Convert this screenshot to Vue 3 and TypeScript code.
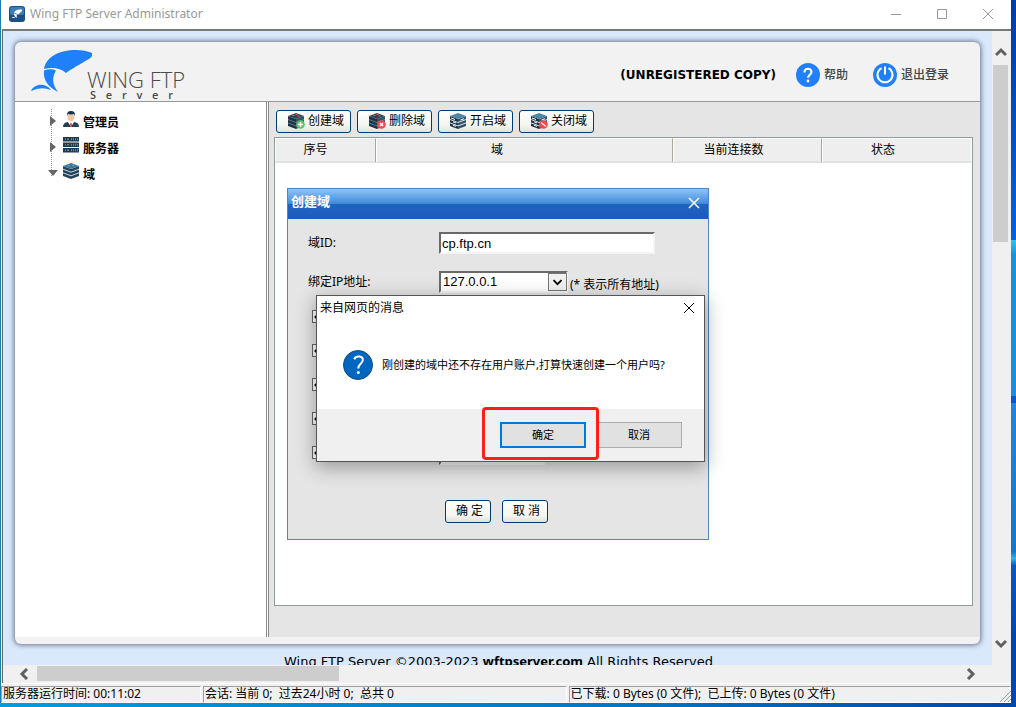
<script setup lang="ts">
import { ref } from 'vue'

type Badge = 'add' | 'remove' | 'none' | 'block'

interface Action {
  label: string
  badge: Badge
  lit: boolean
}

const actions: Action[] = [
  { label: '创建域', badge: 'add', lit: true },
  { label: '删除域', badge: 'remove', lit: true },
  { label: '开启域', badge: 'none', lit: false },
  { label: '关闭域', badge: 'block', lit: false },
]

const columns = ['序号', '域', '当前连接数', '状态']
const services = ['FTP', 'FTPS', 'HTTP', 'HTTPS', 'SSH']

const domainId = ref('cp.ftp.cn')
const address = ref('127.0.0.1')
const enabled = ref<boolean[]>(services.map(() => true))
</script>

<template>
  <div class="desktop">
    <div class="window">
      <header class="titlebar">
        <svg class="app-icon" viewBox="0 0 16 16">
          <rect width="16" height="16" rx="3" fill="#1c4f86" />
          <rect x="1" y="1" width="14" height="8" rx="2" fill="#3c7db8" />
          <path d="M5 7C6 4 9 3 13 3.500L13 5L9 8.500Q7 6.500 5 7Z" fill="#fff" />
          <path d="M5 7.500L8 8.500Q7 10 8.500 12Q5 11 5 7.500ZM2.500 12Q4.500 10 6.500 12Z" fill="#fff" />
        </svg>
        <span class="app-name">Wing FTP Server Administrator</span>
        <button class="caption" aria-label="Minimize">
          <svg viewBox="0 0 12 12"><path d="M1 6.500H11" /></svg>
        </button>
        <button class="caption" aria-label="Maximize">
          <svg viewBox="0 0 12 12"><path d="M1.500 1.500H10.500V10.500H1.500Z" /></svg>
        </button>
        <button class="caption" aria-label="Close">
          <svg viewBox="0 0 12 12"><path d="M1 1L11 11M11 1L1 11" /></svg>
        </button>
      </header>

      <div class="viewport">
        <main class="page">
          <div class="panel">
            <div class="banner">
              <div class="brand">
                <svg class="brand-mark" viewBox="0 0 62 44">
                  <path d="M13 20C15 8 28 1 45 1Q54 1 61 4V7C60 10 46 16 35 24Q27 17 13 20Z" fill="#1f80fa" />
                  <path d="M13 21.500Q20 19 25 21.500C21 28 21 35 27 43C17 38 12 31 13 21.500Z" fill="#1f80fa" />
                  <path d="M0 42C3 35 14 33 20 41Q10 37 0 42Z" fill="#1f80fa" />
                </svg>
                <div class="brand-text">
                  <span class="brand-name">WING FTP</span>
                  <span class="brand-sub"><i v-for="(c, n) in 'Server'" :key="n">{{ c }}</i></span>
                </div>
              </div>
              <strong class="license">(UNREGISTERED COPY)</strong>
              <a class="nav help" href="#help">
                <svg viewBox="0 0 24 24">
                  <circle cx="12" cy="12" r="12" fill="#1f80fa" />
                  <path d="M8.500 9.500C8.500 4.500 15.500 4.700 15.500 9C15.500 11.500 12 12 12 14.800" fill="none" stroke="#fff" stroke-width="2.200" />
                  <circle cx="12" cy="18" r="1.400" fill="#fff" />
                </svg>
                帮助
              </a>
              <a class="nav" href="#logout">
                <svg viewBox="0 0 24 24">
                  <circle cx="12" cy="12" r="12" fill="#1f80fa" />
                  <path d="M8.500 5.200A7.500 7.500 0 1 0 15.500 5.200M12 3.500V11.500" fill="none" stroke="#fff" stroke-width="2" />
                </svg>
                退出登录
              </a>
            </div>

            <div class="body">
              <nav class="tree">
                <ul>
                  <li>
                    <svg class="arrow" viewBox="0 0 10 10"><path d="M2 0L8 5L2 10Z" /></svg>
                    <svg class="node" viewBox="0 0 16 16">
                      <path d="M0 16Q0 11.500 5 11L8 13L11 11Q16 11.500 16 16Z" fill="#243f57" />
                      <path d="M5 11L8 16L11 11L9.500 9H6.500Z" fill="#fff" />
                      <path d="M7.300 12H8.700L9.200 16H6.800Z" fill="#e0454b" />
                      <path d="M4.500 4Q4.500 10.500 8 10.500Q11.500 10.500 11.500 4Z" fill="#f8c3a0" />
                      <path d="M4 5Q3.500 0 8 0Q12.500 0 12 5L11 3Q8 4 5 3Z" fill="#17324a" />
                    </svg>
                    <a href="#admin">管理员</a>
                  </li>
                  <li>
                    <svg class="arrow" viewBox="0 0 10 10"><path d="M2 0L8 5L2 10Z" /></svg>
                    <svg class="node" viewBox="0 0 16 16">
                      <path d="M0 0H16V4.500H0ZM0 5.500H16V10H0ZM0 11H16V15.500H0Z" fill="#1d3a52" />
                      <path d="M8 2.300H15M8 7.800H15M8 13.300H15" stroke="#6e8ba0" stroke-width="2" stroke-dasharray="1 1" />
                      <path d="M2 2.300H3M2 7.800H3M2 13.300H3" stroke="#f5503c" stroke-width="1.500" />
                      <path d="M4.500 2.300H5.500M4.500 7.800H5.500M4.500 13.300H5.500" stroke="#f9c23c" stroke-width="1.500" />
                    </svg>
                    <a href="#server">服务器</a>
                  </li>
                  <li>
                    <svg class="arrow" viewBox="0 0 10 10"><path d="M0 2H10L5 8Z" /></svg>
                    <svg class="node" viewBox="0 0 16 16">
                      <path d="M0 3L8 6L16 3V13L8 16L0 13Z" fill="#24435a" />
                      <path d="M0 6.200L8 9.200L16 6.200M0 9.800L8 12.800L16 9.800" fill="none" stroke="#dfe8ee" stroke-width="0.900" />
                      <path d="M0 3L8 0L16 3L8 6Z" fill="#3f7898" />
                      <path d="M5 2.500H6.500M9.500 2.500H11" stroke="#f58a3c" />
                    </svg>
                    <a href="#domain">域</a>
                  </li>
                </ul>
              </nav>

              <section class="content">
                <div class="toolbar">
                  <button v-for="a in actions" :key="a.label" class="xp-button action">
                    <svg viewBox="0 0 17 16">
                      <path d="M0 3L8 6V16L0 13Z" fill="#1c3346" />
                      <path d="M16 3L8 6V16L16 13Z" fill="#33536b" />
                      <path d="M0 3L8 0L16 3L8 6Z" :fill="a.lit ? '#2b4558' : '#4f86a3'" />
                      <path d="M0 6.500L8 9.500L16 6.500M0 9.900L8 12.900L16 9.900" fill="none" :stroke="a.lit ? '#8fa1ad' : '#f4f6f7'" :stroke-width="a.lit ? 0.6 : 0.9" />
                      <path v-if="a.lit" d="M4.500 2.500H6.500M7.500 1.500H9.500M9.500 3H11.500" stroke="#f5663c" />
                      <path v-else d="M1 5L5 6.500M3 8.800L6 10M3 12.200L6 13.400M10.500 7L14 5.700" stroke="#fff" />
                      <g v-if="a.badge !== 'none'">
                        <circle cx="12.500" cy="11.500" r="4.300" :fill="a.badge === 'add' ? '#42d35d' : '#f2494f'" />
                        <path v-if="a.badge === 'add'" d="M12.500 9V14M10 11.500H15" stroke="#fff" stroke-width="1.500" />
                        <path v-else-if="a.badge === 'remove'" d="M11 10L14 13M14 10L11 13" stroke="#fff" stroke-width="1.500" />
                        <path v-else d="M10 9.500L15 13.500" stroke="#fff" stroke-width="1.200" />
                      </g>
                    </svg>
                    <span>{{ a.label }}</span>
                  </button>
                </div>

                <div class="grid">
                  <table>
                    <thead>
                      <tr>
                        <th v-for="c in columns" :key="c" scope="col">{{ c }}</th>
                      </tr>
                    </thead>
                  </table>
                </div>

                <form class="dialog" @submit.prevent>
                  <div class="dialog-title">
                    <strong>创建域</strong>
                    <button type="button" aria-label="关闭">
                      <svg viewBox="0 0 12 12"><path d="M1 1L11 11M11 1L1 11" /></svg>
                    </button>
                  </div>
                  <div class="fields">
                    <div class="field">
                      <label for="domain-id">域ID:</label>
                      <input id="domain-id" v-model="domainId" class="sunken wide" type="text" />
                    </div>
                    <div class="field">
                      <label for="address">绑定IP地址:</label>
                      <div class="combo">
                        <select id="address" v-model="address" class="sunken">
                          <option>127.0.0.1</option>
                          <option>*</option>
                        </select>
                        <svg viewBox="0 0 16 18"><path d="M3.500 7L8 11.500L12.500 7" /></svg>
                      </div>
                      <span class="hint">(* 表示所有地址)</span>
                    </div>
                    <div v-for="(s, n) in services" :key="s" class="service">
                      <input v-model="enabled[n]" type="checkbox" :aria-label="s" />
                      <input class="sunken port" type="text" :aria-label="s" />
                    </div>
                  </div>
                  <div class="dialog-buttons">
                    <button class="xp-button" type="submit">确 定</button>
                    <button class="xp-button" type="button">取 消</button>
                  </div>
                </form>
              </section>
            </div>
          </div>
          <footer class="copyright">Wing FTP Server ©2003-2023 <a href="#home">wftpserver.com</a> All Rights Reserved</footer>
        </main>

        <div class="scroll vertical">
          <button aria-label="Up"><svg viewBox="0 0 12 12"><path d="M1 9L6 4L11 9" /></svg></button>
          <div class="track"><div class="thumb"></div></div>
          <button aria-label="Down"><svg viewBox="0 0 12 12"><path d="M1 3L6 8L11 3" /></svg></button>
        </div>
        <div class="scroll horizontal">
          <button aria-label="Left"><svg viewBox="0 0 12 12"><path d="M9 1L4 6L9 11" /></svg></button>
          <div class="track"><div class="thumb"></div></div>
          <button aria-label="Right"><svg viewBox="0 0 12 12"><path d="M3 1L8 6L3 11" /></svg></button>
        </div>
      </div>

      <div class="statusbar">
        <span>服务器运行时间: 00:11:02</span>
        <span>会话: 当前 0;&nbsp; 过去24小时 0;&nbsp; 总共 0</span>
        <span>已下载: 0 Bytes (0 文件);&nbsp; 已上传: 0 Bytes (0 文件)</span>
        <svg class="grip" viewBox="0 0 12 12"><path d="M1 12L12 1M5 12L12 5M9 12L12 9" /></svg>
      </div>

      <div class="alert" role="alertdialog" aria-labelledby="alert-title">
        <div class="alert-title">
          <span id="alert-title">来自网页的消息</span>
          <button aria-label="关闭">
            <svg viewBox="0 0 12 12"><path d="M1 1L11 11M11 1L1 11" /></svg>
          </button>
        </div>
        <div class="alert-body">
          <svg viewBox="0 0 30 30">
            <circle cx="15" cy="15" r="14.500" fill="#0067c0" stroke="#114a80" />
            <path d="M11.200 9.200C13 5.500 20 5.700 19.800 10C19.700 14 15.300 13.800 15.300 18.500" fill="none" stroke="#fff" stroke-width="2" />
            <circle cx="15.300" cy="22.500" r="1.500" fill="#fff" />
          </svg>
          <p>刚创建的域中还不存在用户账户,打算快速创建一个用户吗?</p>
        </div>
        <div class="alert-actions">
          <button class="default">确定</button>
          <button>取消</button>
        </div>
        <div class="highlight"></div>
      </div>
    </div>
  </div>
</template>

<style>
body {
  margin: 0;
}
</style>

<style scoped>
* {
  box-sizing: border-box;
}
.desktop {
  height: 100vh;
  padding: 0 5px 4px 1px;
  display: flex;
  background:
    linear-gradient(90deg, #009cdf, #0078c8 60%, #0047ab) bottom / 100% 4px no-repeat,
    linear-gradient(180deg, #003ba8, #0062e2 34%, #29c5ee 34%, #1593dc 36%, #1a8ee0 56%, #0a58d0 56%, #0a58d0 57%, #1f86de 57%, #1277cc 78%, #29b5e6 79%, #0a58c0 80%, #0046b0 90%) right / 5px 100% no-repeat,
    #1d7fae;
  color: #000;
  font: 12px/16px "Noto Sans", "Noto Sans CJK SC", sans-serif;
  overflow: hidden;
}
button,
input,
select {
  font: inherit;
  color: inherit;
  margin: 0;
}
button {
  padding: 0;
  border: 0;
  background: none;
}
a {
  color: inherit;
  text-decoration: none;
}
.window {
  position: relative;
  flex: 1;
  display: flex;
  flex-direction: column;
  background: #f0f0f0;
  min-width: 0;
}
.titlebar {
  height: 29px;
  display: flex;
  align-items: center;
  background: #fff;
  padding: 0 0 2px 8px;
}
.app-icon {
  width: 16px;
  height: 16px;
}
.app-name {
  flex: 1;
  margin-left: 5px;
  color: #999;
}
.caption {
  width: 46px;
  height: 26px;
}
.caption svg {
  width: 12px;
  height: 12px;
  display: block;
  margin: auto;
  fill: none;
  stroke: #999;
}
.viewport {
  flex: 1;
  min-height: 0;
  display: grid;
  grid-template: minmax(0, 1fr) 18px / minmax(0, 1fr) 19px;
  border: solid #666b6b;
  border-width: 2px 0 0 1px;
  border-top-color: #777b78;
  margin-left: 1px;
}
.page {
  background: #d9e8fb;
  overflow: hidden;
  padding: 11px 12px 0;
  display: flex;
  flex-direction: column;
}
.panel {
  flex: 1;
  min-height: 0;
  display: flex;
  flex-direction: column;
  padding-bottom: 7px;
  background: #f2f2f2;
  border-radius: 6px;
  box-shadow: 0 0 5px 1px #66708a;
}
.banner {
  height: 60px;
  flex: none;
  display: flex;
  align-items: center;
  padding: 6px 31px 0 16px;
  border-bottom: 1px solid #999;
}
.brand {
  flex: 1;
  display: flex;
  align-items: flex-start;
  margin-bottom: 2px;
}
.brand-mark {
  width: 62px;
  height: 44px;
}
.brand-text {
  margin: 18px 0 0 -6px;
  width: 94px;
  display: flex;
  flex-direction: column;
  color: #4a4a4a;
  font-family: "Open Sans", sans-serif;
}
.brand-name {
  font-size: 22px;
  line-height: 24px;
  font-weight: 300;
  white-space: nowrap;
}
.brand-sub {
  display: flex;
  justify-content: space-between;
  padding: 0 8px 0 3px;
  font-size: 11px;
  line-height: 8px;
  font-weight: 600;
}
.brand-sub i {
  font-style: normal;
}
.license {
  font: bold 12px/16px "DejaVu Sans", sans-serif;
  margin-right: 20px;
}
.nav {
  display: flex;
  align-items: center;
  gap: 4px;
  color: #444;
  font-weight: 500;
}
.help {
  margin-right: 25px;
}
.nav svg {
  width: 24px;
  height: 24px;
}
.body {
  flex: 1;
  min-height: 0;
  display: flex;
}
.tree {
  width: 254px;
  flex: none;
  background: #fff;
  border-right: 3px double #8c8c8c;
}
.tree ul {
  list-style: none;
  margin: 6px 0 0 33px;
  padding: 0;
  background: linear-gradient(#fff 50%, #999 50%) 3px 0 / 1px 2px repeat-y;
  height: 68px;
}
.tree li {
  height: 26px;
  display: flex;
  align-items: center;
  font-weight: bold;
}
.arrow {
  width: 10px;
  height: 10px;
  fill: #666;
}
.node {
  width: 16px;
  height: 16px;
  margin: 0 4px 4px 5px;
}
.node + a {
  margin-top: 4px;
}
.content {
  position: relative;
  flex: 1;
  min-width: 0;
  display: flex;
  flex-direction: column;
  background: #e5e5e5;
  padding: 8px 7px 31px 5px;
}
.toolbar {
  display: flex;
  gap: 6px;
  padding-left: 2px;
}
.xp-button {
  height: 23px;
  border: 1px solid #003c74;
  border-radius: 3px;
  background: linear-gradient(#fff, #f4f4f0 70%, #e2e2d8);
  padding: 0 0 2px 3px;
}
.action {
  width: 75px;
  display: flex;
  align-items: center;
  justify-content: center;
  gap: 3px;
  padding-left: 5px;
}
.action svg {
  width: 17px;
  height: 16px;
}
.grid {
  flex: 1;
  margin-top: 4px;
  background: #fff;
  border: 1px solid #919b9c;
}
.grid table {
  width: 100%;
  table-layout: fixed;
  border-collapse: separate;
  border-spacing: 0;
}
.grid th {
  height: 25px;
  padding: 0 20px 0 0;
  background: #eee;
  font-weight: normal;
  border: solid;
  border-width: 1px 1px 2px 1px;
  border-color: #fff #aca899 #e2e2e2 #fff;
}
.grid th:nth-child(1) {
  width: 101px;
}
.grid th:nth-child(2) {
  width: auto;
  padding-right: 55px;
}
.grid th:nth-child(3) {
  width: 149px;
  padding-right: 28px;
}
.grid th:nth-child(4) {
  width: 150px;
  padding-right: 28px;
  border-right-color: #fff;
}
.dialog {
  position: absolute;
  left: 18px;
  top: 86px;
  width: 422px;
  background: #e5e5e5;
  border: 1px solid #4a86c8;
}
.dialog-title {
  height: 30px;
  display: flex;
  justify-content: space-between;
  padding: 4px 8px 0 3px;
  color: #fff;
  font-size: 13px;
  background: linear-gradient(#8fc3f8, #3f89d8 50%, #1f64c0 50%, #1c5bbd);
}
.dialog-title button {
  height: 20px;
}
.dialog-title svg,
.alert-title svg {
  width: 12px;
  height: 12px;
  display: block;
  fill: none;
  stroke: #fff;
  stroke-width: 1.5;
}
.fields {
  padding: 13px 20px 1px;
}
.field {
  display: flex;
  align-items: flex-start;
  height: 39px;
}
.field label {
  width: 131px;
  padding-top: 3px;
}
.sunken {
  height: 22px;
  padding: 0 1px;
  background: #fff;
  border: 2px solid;
  border-color: #696969 #f4f4f4 #f4f4f4 #696969;
  border-radius: 0;
  font: 13px/18px "Liberation Sans", Arial, sans-serif;
  outline: 0;
}
.wide {
  width: 216px;
}
.combo {
  position: relative;
}
.combo select {
  width: 129px;
  padding: 0 2px;
  appearance: none;
  display: block;
}
.combo svg {
  position: absolute;
  right: 1px;
  top: 2px;
  width: 19px;
  height: 18px;
  background: #f0f0f0;
  border: 1px solid #777;
  fill: none;
  stroke: #000;
  stroke-width: 2;
  pointer-events: none;
}
.hint {
  padding: 6px 0 0 2px;
  white-space: nowrap;
}
.service {
  display: flex;
  align-items: flex-start;
  height: 34px;
  padding-left: 4px;
}
.service input[type="checkbox"] {
  appearance: none;
  width: 13px;
  height: 13px;
  background: radial-gradient(circle at 3px 6px, #000 1px, #fff 2px);
  border: 1px solid #666;
}
.port {
  width: 106px;
  height: 19px;
  margin-left: 114px;
}
.dialog-buttons {
  display: flex;
  justify-content: center;
  gap: 11px;
  padding: 19px 0 16px;
  margin-right: 3px;
}
.dialog-buttons button {
  width: 46px;
}
.copyright {
  height: 21px;
  padding: 7px 0 0 2px;
  font: 13px/20px "DejaVu Sans", sans-serif;
  text-align: center;
  white-space: nowrap;
  flex: none;
}
.copyright a {
  font: bold 13px/20px "Noto Sans", sans-serif;
}
.scroll {
  display: flex;
  background: #f0f0f0;
}
.scroll button svg {
  display: block;
  width: 12px;
  height: 12px;
  margin: auto;
  fill: none;
  stroke: #606060;
  stroke-width: 3;
}
.vertical {
  flex-direction: column;
  padding: 12px 3px 12px 1px;
}
.vertical button {
  height: 18px;
}
.vertical .track {
  flex: 1;
  padding-top: 4px;
}
.vertical .thumb {
  height: 31%;
  width: 15px;
  background: #cdcdcd;
}
.horizontal {
  padding: 1px 13px 2px 12px;
}
.horizontal button {
  width: 17px;
}
.horizontal .track {
  flex: 1;
  padding-left: 5px;
}
.horizontal .thumb {
  width: 32.6%;
  height: 15px;
  background: #cdcdcd;
}
.statusbar {
  display: flex;
  gap: 2px;
  height: 20px;
  padding-top: 2px;
  border-top: 1px solid #fff;
}
.statusbar span {
  border: 1px solid;
  border-color: #a0a0a0 #fff #fff #a0a0a0;
  padding-left: 1px;
  white-space: nowrap;
  line-height: 14px;
}
.statusbar span:nth-child(1) {
  width: 19.8%;
}
.statusbar span:nth-child(2) {
  width: 36%;
}
.statusbar span:nth-child(3) {
  flex: 1;
}
.grip {
  width: 12px;
  height: 12px;
  align-self: flex-end;
  margin: 0 0 1px -14px;
  stroke: #999;
}
.alert {
  position: absolute;
  left: 315px;
  top: 295px;
  width: 389px;
  background: #fff;
  border: 1px solid #555;
  box-shadow: 0 5px 18px 1px rgba(0, 0, 0, 0.32);
}
.alert-title {
  display: flex;
  justify-content: space-between;
  padding: 4px 9px 4px 3px;
}
.alert-title svg {
  stroke: #000;
  stroke-width: 1;
}
.alert-body {
  display: flex;
  align-items: center;
  gap: 9px;
  height: 89px;
  padding-left: 26px;
  font-size: 11px;
}
.alert-body svg {
  width: 30px;
  height: 30px;
}
.alert-body p {
  margin: 0;
  white-space: nowrap;
}
.alert-actions {
  display: flex;
  justify-content: flex-end;
  gap: 10px;
  padding: 13px 22px;
  background: #f0f0f0;
  font-size: 11px;
}
.alert-actions button {
  width: 86px;
  height: 26px;
  background: #e1e1e1;
  border: 1px solid #adadad;
}
.alert-actions .default {
  border: 2px solid #0078d7;
}
.highlight {
  position: absolute;
  left: 165px;
  top: 111px;
  width: 117px;
  height: 53px;
  border: 3px solid #ff2015;
  border-radius: 4px;
}
</style>
